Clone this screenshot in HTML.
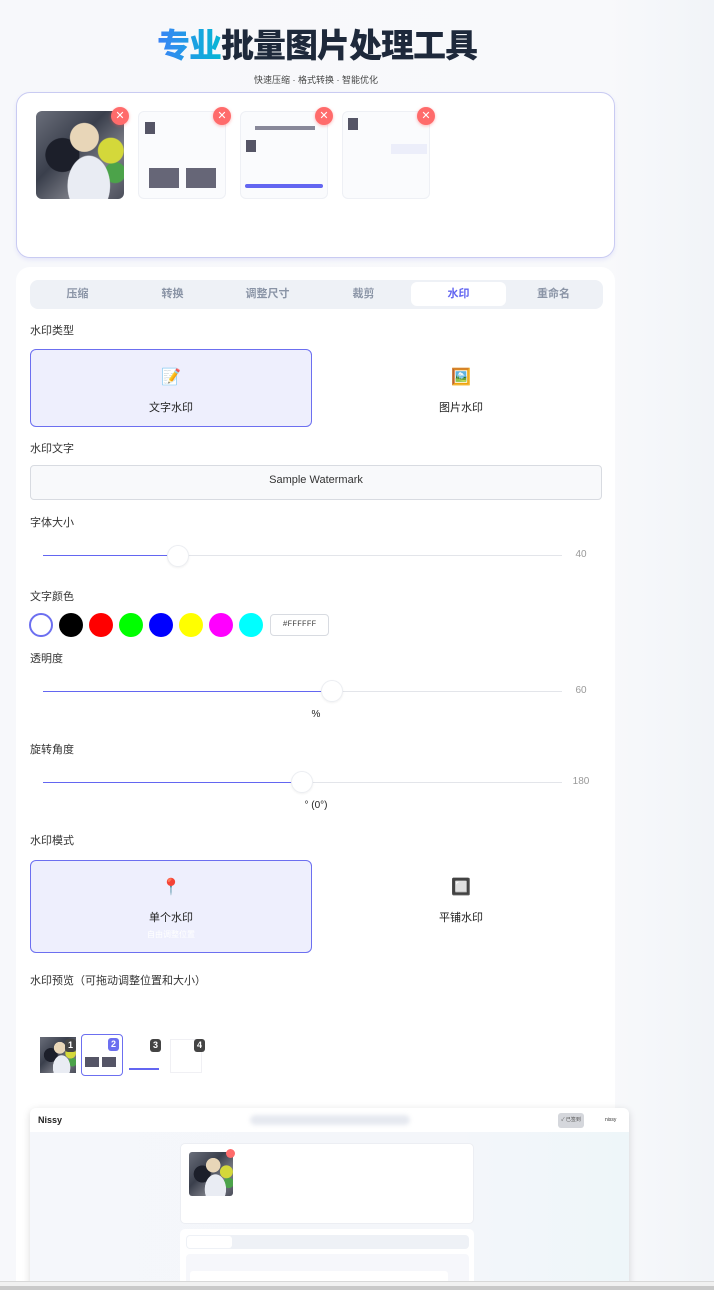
<!DOCTYPE html>
<html><head><meta charset="utf-8"><style>
*{box-sizing:border-box;margin:0;padding:0}
html,body{width:714px;height:1290px;overflow:hidden}
body{background:linear-gradient(90deg,#f7f8fb 0%,#f8f9fb 85%,#f1f4f8 100%);font-family:"Liberation Sans","Noto Sans CJK SC",sans-serif;color:#222;position:relative}
.a{position:absolute}
.card{position:absolute;background:#fff;border-radius:14px}
.lbl{position:absolute;left:30px;font-size:11px;color:#333}
.thumb{position:absolute;top:111px;width:88px;height:88px;border-radius:6px;overflow:hidden}
.anime{background:
 radial-gradient(circle at 55% 30%,#e8d6b8 0 18%,transparent 19%),
 radial-gradient(ellipse at 60% 85%,#e9ecf3 0 28%,transparent 29%),
 radial-gradient(circle at 85% 45%,#d4d83a 0 14%,transparent 15%),
 radial-gradient(circle at 90% 70%,#4ca34a 0 10%,transparent 11%),
 radial-gradient(circle at 30% 50%,#1c1f2a 0 22%,transparent 23%),
 linear-gradient(135deg,#6a6e7a,#3a3f4c 40%,#7d7f88 70%,#4a4d5a)}
.shot{background:#fafbfd;border:1px solid #eef0f5}
.x{position:absolute;top:107px;width:18px;height:18px;border-radius:50%;background:#ff6b6b;color:#fff;font-size:11px;line-height:18px;text-align:center;box-shadow:0 1px 3px rgba(255,80,80,.4)}
.tab{position:absolute;top:283px;height:23px;line-height:23px;text-align:center;font-size:11px;color:#8a94a6;font-weight:bold}
.opt{position:absolute;left:30px;width:282px;border:1px solid #6c6ff0;background:#eeeffd;border-radius:6px}
.track{position:absolute;left:43px;width:519px;height:1px;background:#e3e5ea}
.fill{position:absolute;left:43px;height:1px;background:#6366f1}
.thm{position:absolute;width:22px;height:22px;border-radius:50%;background:#fff;border:1px solid #eceef2;box-shadow:0 1px 2px rgba(0,0,0,.06)}
.val{position:absolute;left:566px;width:30px;text-align:center;font-size:10px;color:#999}
.sw{position:absolute;top:613px;width:24px;height:24px;border-radius:50%}
.ctr{position:absolute;text-align:center;font-size:11px}
.badge{position:absolute;width:11px;height:13px;border-radius:3px;background:#444;color:#fff;font-size:9px;font-weight:bold;text-align:center;line-height:13px}
</style></head><body>

<div class="a" style="left:0;width:634px;top:24px;text-align:center;font-size:33px;font-weight:900;letter-spacing:-1px;color:#1e293b;line-height:44px"><span style="background:linear-gradient(90deg,#3b82f6,#06b6d4);-webkit-background-clip:text;color:transparent">专业</span>批量图片处理工具</div>
<div class="a" style="left:0;width:632px;top:73px;text-align:center;font-size:9px;color:#444">快速压缩 · 格式转换 · 智能优化</div>

<div class="card" style="left:16px;top:92px;width:599px;height:166px;border:1px solid #c9cbf2;box-shadow:0 2px 4px rgba(99,102,241,.12)"></div>
<div class="thumb anime" style="left:36px"></div>
<div class="thumb shot" style="left:138px"><div class="a" style="left:6px;top:10px;width:10px;height:12px;background:#556"></div><div class="a" style="left:10px;top:56px;width:30px;height:20px;background:#667"></div><div class="a" style="left:47px;top:56px;width:30px;height:20px;background:#667"></div></div>
<div class="thumb shot" style="left:240px"><div class="a" style="left:14px;top:14px;width:60px;height:4px;background:#889"></div><div class="a" style="left:5px;top:28px;width:10px;height:12px;background:#556"></div><div class="a" style="left:4px;top:72px;width:78px;height:4px;background:#6366f1;border-radius:2px"></div></div>
<div class="thumb shot" style="left:342px"><div class="a" style="left:5px;top:6px;width:10px;height:12px;background:#556"></div><div class="a" style="left:48px;top:32px;width:36px;height:10px;background:#eceefa"></div></div>
<div class="x" style="left:111px">✕</div><div class="x" style="left:213px">✕</div><div class="x" style="left:315px">✕</div><div class="x" style="left:417px">✕</div>

<div class="card" style="left:16px;top:267px;width:599px;height:1040px"></div>
<div class="a" style="left:30px;top:280px;width:573px;height:29px;background:#eef1f6;border-radius:8px"></div>
<div class="a" style="left:411px;top:282px;width:95px;height:24px;background:#fff;border-radius:6px"></div>
<div class="tab" style="left:30px;width:95px">压缩</div>
<div class="tab" style="left:125px;width:95px">转换</div>
<div class="tab" style="left:220px;width:95px">调整尺寸</div>
<div class="tab" style="left:316px;width:95px">裁剪</div>
<div class="tab" style="left:411px;width:95px;color:#6366f1">水印</div>
<div class="tab" style="left:506px;width:95px">重命名</div>

<div class="lbl" style="top:322px">水印类型</div>
<div class="opt" style="top:349px;height:78px"></div>
<div class="ctr" style="left:30px;width:282px;top:367px;font-size:16px">📝</div>
<div class="ctr" style="left:30px;width:282px;top:399px">文字水印</div>
<div class="ctr" style="left:320px;width:282px;top:367px;font-size:16px">🖼️</div>
<div class="ctr" style="left:320px;width:282px;top:399px">图片水印</div>

<div class="lbl" style="top:440px">水印文字</div>
<div class="a" style="left:30px;top:465px;width:572px;height:35px;border:1px solid #d8dbe1;border-radius:4px;background:#f8f9fb;text-align:center;font-size:11px;line-height:28px;color:#333">Sample Watermark</div>

<div class="lbl" style="top:514px">字体大小</div>
<div class="track" style="top:555px"></div><div class="fill" style="top:555px;width:125px"></div>
<div class="thm" style="left:167px;top:545px"></div><div class="val" style="top:549px">40</div>

<div class="lbl" style="top:588px">文字颜色</div>
<div class="sw" style="left:29px;border:2px solid #6c6ff0;background:#fff"></div>
<div class="sw" style="left:59px;background:#000"></div>
<div class="sw" style="left:89px;background:#f00"></div>
<div class="sw" style="left:119px;background:#0f0"></div>
<div class="sw" style="left:149px;background:#00f"></div>
<div class="sw" style="left:179px;background:#ff0"></div>
<div class="sw" style="left:209px;background:#f0f"></div>
<div class="sw" style="left:239px;background:#0ff"></div>
<div class="a" style="left:270px;top:614px;width:59px;height:22px;border:1px solid #d8dbe1;border-radius:4px;font-size:8px;line-height:20px;text-align:center;color:#444;font-family:'Liberation Mono',monospace">#FFFFFF</div>

<div class="lbl" style="top:650px">透明度</div>
<div class="track" style="top:691px"></div><div class="fill" style="top:691px;width:279px"></div>
<div class="thm" style="left:321px;top:680px"></div><div class="val" style="top:685px">60</div>
<div class="ctr" style="left:0;width:632px;top:709px;font-size:10px">%</div>

<div class="lbl" style="top:741px">旋转角度</div>
<div class="track" style="top:782px"></div><div class="fill" style="top:782px;width:250px"></div>
<div class="thm" style="left:291px;top:771px"></div><div class="val" style="top:776px">180</div>
<div class="ctr" style="left:0;width:632px;top:800px;font-size:10px">° (0°)</div>

<div class="lbl" style="top:832px">水印模式</div>
<div class="opt" style="top:860px;height:93px"></div>
<div class="ctr" style="left:30px;width:282px;top:877px;font-size:16px">📍</div>
<div class="ctr" style="left:30px;width:282px;top:909px">单个水印</div>
<div class="ctr" style="left:30px;width:282px;top:929px;font-size:8px;color:#fff">自由调整位置</div>
<div class="ctr" style="left:320px;width:282px;top:877px;font-size:16px;color:#7a6a90">🔲</div>
<div class="ctr" style="left:320px;width:282px;top:909px">平铺水印</div>

<div class="lbl" style="top:972px">水印预览（可拖动调整位置和大小）</div>
<div class="a anime" style="left:40px;top:1037px;width:36px;height:36px"></div>
<div class="a" style="left:81px;top:1034px;width:42px;height:42px;border:1.5px solid #6c6ff0;border-radius:4px;background:#fff"><div class="a" style="left:3px;top:22px;width:14px;height:10px;background:#556"></div><div class="a" style="left:20px;top:22px;width:14px;height:10px;background:#556"></div></div>
<div class="a" style="left:127px;top:1039px;width:34px;height:34px;background:#fff"><div class="a" style="left:2px;top:29px;width:30px;height:2px;background:#6366f1"></div></div>
<div class="a" style="left:170px;top:1039px;width:32px;height:34px;background:#fff;border:1px solid #f0f0f4"></div>
<div class="badge" style="left:65px;top:1039px">1</div>
<div class="badge" style="left:108px;top:1038px;background:#6c6ff0">2</div>
<div class="badge" style="left:150px;top:1039px">3</div>
<div class="badge" style="left:194px;top:1039px">4</div>

<div class="a" style="left:30px;top:1108px;width:599px;height:190px;background:linear-gradient(90deg,#f5f7fb,#f4f6fa 70%,#eef6f9);border-radius:6px;box-shadow:0 2px 8px rgba(0,0,0,.15);overflow:hidden">
 <div class="a" style="left:0;top:0;width:599px;height:24px;background:#fff"></div>
 <div class="a" style="left:8px;top:7px;font-size:9px;font-weight:bold;color:#222">Nissy</div>
 <div class="a" style="left:220px;top:7px;width:160px;height:10px;background:#e6e9f0;border-radius:5px;filter:blur(2px)"></div>
 <div class="a" style="left:528px;top:5px;width:26px;height:15px;background:#d5d7dc;border-radius:3px;font-size:5px;line-height:15px;text-align:center;color:#555">✓ 已签到</div>
 <div class="a" style="left:575px;top:9px;font-size:5px;color:#333">nissy</div>
 <div class="a" style="left:150px;top:35px;width:294px;height:81px;background:#fff;border-radius:5px;border:1px solid #eceef3"></div>
 <div class="a anime" style="left:159px;top:44px;width:44px;height:44px;border-radius:3px"></div>
 <div class="a" style="left:196px;top:41px;width:9px;height:9px;border-radius:50%;background:#ff6b6b"></div>
 <div class="a" style="left:150px;top:121px;width:294px;height:80px;background:#fff;border-radius:5px"></div>
 <div class="a" style="left:156px;top:127px;width:283px;height:14px;background:#eef1f6;border-radius:4px"></div>
 <div class="a" style="left:157px;top:128px;width:45px;height:12px;background:#fff;border-radius:3px"></div>
 <div class="a" style="left:156px;top:146px;width:283px;height:40px;background:#f6f7fb;border-radius:4px"></div>
 <div class="a" style="left:160px;top:163px;width:258px;height:20px;background:#fff;border-radius:3px"></div>
</div>
<div class="a" style="left:0;top:1281px;width:714px;height:9px;background:#f1f1f1;border-top:1px solid #d8d8d8"></div>
<div class="a" style="left:0;top:1286px;width:714px;height:4px;background:#c9c9c9"></div>
</body></html>
